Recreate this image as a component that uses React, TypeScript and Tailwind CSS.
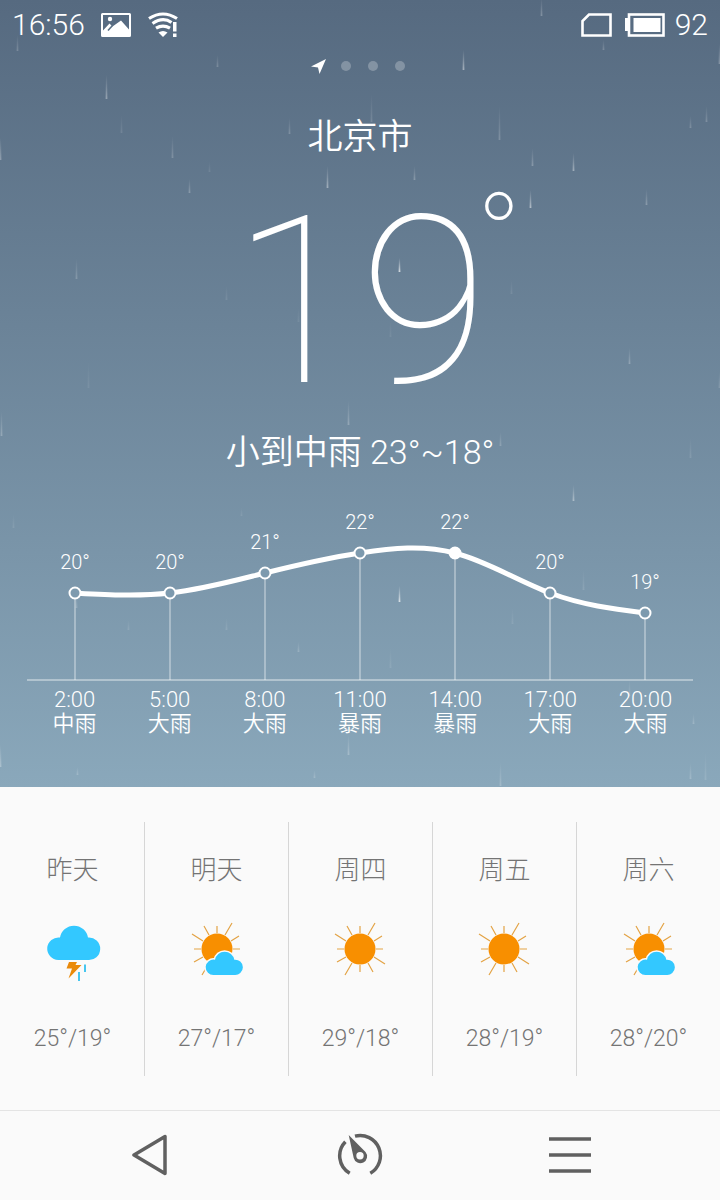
type Icon = 'thunder' | 'partly' | 'sunny'

const hours = [
  { time: '2:00', weather: '中雨', temp: 20 },
  { time: '5:00', weather: '大雨', temp: 20 },
  { time: '8:00', weather: '大雨', temp: 21 },
  { time: '11:00', weather: '暴雨', temp: 22 },
  { time: '14:00', weather: '暴雨', temp: 22, current: true },
  { time: '17:00', weather: '大雨', temp: 20 },
  { time: '20:00', weather: '大雨', temp: 19 },
]

const days: { name: string; icon: Icon; range: string }[] = [
  { name: '昨天', icon: 'thunder', range: '25°/19°' },
  { name: '明天', icon: 'partly', range: '27°/17°' },
  { name: '周四', icon: 'sunny', range: '29°/18°' },
  { name: '周五', icon: 'sunny', range: '28°/19°' },
  { name: '周六', icon: 'partly', range: '28°/20°' },
]

// x, bottom, length, opacity
const drops = [
  [17, 51, 16, 0.2], [106, 99, 24, 0.35], [217, 67, 12, 0.2], [463, 70, 20, 0.45],
  [121, 133, 18, 0.12], [172, 158, 22, 0.2], [289, 134, 16, 0.2], [371, 122, 28, 0.15],
  [499, 140, 34, 0.2], [532, 166, 18, 0.25], [573, 171, 18, 0.4], [690, 128, 12, 0.2],
  [706, 122, 16, 0.2], [189, 193, 14, 0.25], [327, 188, 22, 0.4], [414, 180, 14, 0.25],
  [530, 208, 18, 0.5], [646, 205, 16, 0.25], [209, 172, 10, 0.1], [76, 279, 20, 0.2],
  [399, 272, 14, 0.7], [226, 300, 14, 0.1], [511, 294, 14, 0.1], [629, 364, 16, 0.25],
  [88, 388, 26, 0.08], [390, 337, 16, 0.08], [298, 322, 14, 0.08], [348, 425, 24, 0.25],
  [573, 501, 16, 0.4], [500, 446, 14, 0.2], [690, 458, 20, 0.12], [1, 436, 24, 0.25],
  [0, 160, 22, 0.3], [719, 64, 20, 0.25], [541, 16, 18, 0.25], [603, 50, 10, 0.2],
  [76, 608, 12, 0.2], [399, 602, 16, 0.7], [583, 590, 20, 0.12], [128, 630, 10, 0.12],
  [226, 630, 12, 0.12], [298, 652, 10, 0.2], [512, 624, 16, 0.1], [390, 668, 20, 0.1],
  [629, 696, 16, 0.15], [693, 724, 10, 0.2], [348, 755, 20, 0.25], [0, 767, 22, 0.3],
  [77, 775, 8, 0.2], [314, 778, 8, 0.2], [500, 786, 24, 0.2], [690, 779, 16, 0.2],
  [705, 780, 28, 0.12], [13, 528, 14, 0.1], [241, 516, 8, 0.1], [719, 388, 16, 0.15],
]

function Rain() {
  return (
    <svg
      className="pointer-events-none absolute inset-0 h-full w-full"
      viewBox="0 0 720 787"
      preserveAspectRatio="xMidYMid slice"
      aria-hidden="true"
    >
      <defs>
        <linearGradient id="drop" x1="0" y1="0" x2="0" y2="1">
          <stop offset="0" stopColor="#fff" stopOpacity="0" />
          <stop offset="1" stopColor="#fff" />
        </linearGradient>
      </defs>
      {drops.map(([x, bottom, length, opacity], i) => (
        <path
          key={i}
          d={`M${x} ${bottom - length}h1l.4 ${length}h-1.8z`}
          fill="url(#drop)"
          opacity={opacity}
        />
      ))}
    </svg>
  )
}

function StatusBar() {
  return (
    <div className="flex h-[50px] items-center justify-between px-3 text-[30px] leading-9 font-light">
      <div className="flex items-center">
        <span>16:56</span>
        <svg className="ml-4" width="30" height="24" viewBox="0 0 30 24" aria-hidden="true">
          <rect x="1" y="1" width="28" height="22" rx="0.5" fill="none" stroke="#fff" strokeWidth="2" />
          <circle cx="9" cy="6" r="2.2" fill="#fff" />
          <path d="M2 17.500 8.500 10.500 11.500 13.500 20 7.500 28 16.500V22.500H2Z" fill="#fff" />
          <path d="M7 17.500 11.500 12.500" stroke="#5a7085" strokeWidth="1.600" />
        </svg>
        <svg className="ml-[17px]" width="31" height="26" viewBox="0 0 31 26" aria-hidden="true">
          <g fill="none" stroke="#fff" strokeWidth="3.200">
            <path d="M1 6.500Q15 -2.500 29 6.500" />
            <path d="M4.500 11.500Q15 4.500 23.500 10.500" />
            <path d="M8 16.200Q15 12 22 16.200" />
          </g>
          <path d="M10.500 20.500Q15 17.500 19.500 20.500L15 25Z" fill="#fff" />
          <path d="M25 10h3.500v9.500H25zM25 21.500h3.500V25H25z" fill="#fff" />
        </svg>
      </div>
      <div className="flex items-center">
        <svg width="31" height="24" viewBox="0 0 31 24" aria-hidden="true">
          <path d="M8 1.500H29.500V22.500H1.500V8Z" fill="none" stroke="#fff" strokeWidth="2.600" />
        </svg>
        <svg className="mr-[10px] ml-[13px]" width="40" height="24" viewBox="0 0 40 24" aria-hidden="true">
          <path d="M0 5h3v13H0z" fill="#fff" />
          <rect x="4" y="1.500" width="34.500" height="21" fill="none" stroke="#fff" strokeWidth="2.600" />
          <rect x="8.500" y="5" width="27" height="14" fill="#fff" />
        </svg>
        <span>92</span>
      </div>
    </div>
  )
}

function Pager() {
  return (
    <div className="flex h-8 items-center justify-center gap-[17px] pr-1">
      <svg className="-mr-0.5" width="15" height="15" viewBox="0 0 15 15" aria-hidden="true">
        <path d="M15 0 8.500 15 7 8.500 0 7.500Z" fill="#fff" />
      </svg>
      <span className="size-[10px] rounded-full bg-white/25" />
      <span className="size-[10px] rounded-full bg-white/25" />
      <span className="size-[10px] rounded-full bg-white/25" />
    </div>
  )
}

function HourlyChart() {
  const points = hours.map((hour, i) => ({
    ...hour,
    x: 48 + i * 95,
    y: 93 - (hour.temp - 20) * 20,
  }))

  return (
    <svg className="block w-full" viewBox="0 0 666 181" role="img" aria-label="24小时气温">
      <g stroke="#fff" strokeOpacity="0.5" strokeWidth="1.300">
        {points.map((p) => (
          <path key={p.time} d={`M${p.x} ${p.y + 6}V180`} />
        ))}
        <path d="M0 180H666" />
      </g>
      <path
        d="M48 93C80 94.700 111 96.500 143 93S206 81 238 73S301 58 333 53S396 44.700 428 53S491 81 523 93S586 109 618 113"
        fill="none"
        stroke="#fff"
        strokeWidth="5"
      />
      {points.map((p) => (
        <g key={p.time}>
          <circle
            cx={p.x}
            cy={p.y}
            r="5.500"
            fill={p.current ? '#fff' : '#7d9aae'}
            stroke="#fff"
            strokeWidth="2"
          />
          <text x={p.x} y={p.y - 24} textAnchor="middle" fill="#fff" className="text-[20px] font-light">
            {p.temp}°
          </text>
        </g>
      ))}
    </svg>
  )
}

function Sun({ cx, cloudy }: { cx: number; cloudy?: boolean }) {
  return (
    <g transform={`translate(${cx} 29)`}>
      <path
        d="M0-16V-23M0 16V23M-16 0H-23M16 0H23M-14-8-25-15M-8-14-13-23M8-14 15-26M14-8 22-13M-8 14-15 26M-14 8-23 13"
        stroke="#e3a345"
        strokeWidth="1.200"
        fill="none"
      />
      {!cloudy && <path d="M14 8 25 15M8 14 13 23" stroke="#e3a345" strokeWidth="1.200" />}
      <circle r="15.500" fill="#f88f00" />
    </g>
  )
}

function WeatherIcon({ icon }: { icon: Icon }) {
  return (
    <svg width="64" height="64" viewBox="1 0 64 64" aria-hidden="true">
      {icon === 'thunder' && (
        <>
          <path
            d="M18.300 40A11.300 11.300 0 1 1 20 17.500 14.200 14.200 0 0 1 48 17.500 11.300 11.300 0 1 1 47.700 40Z"
            fill="#33c8ff"
          />
          <path d="M29 42H37L35.500 45H41.500L28.500 58.500 32 48.500H26.500Z" fill="#ea8a0a" />
          <path d="M39 52V61M45 44.500V52" stroke="#33c0ee" strokeWidth="1.800" />
        </>
      )}
      {icon === 'sunny' && <Sun cx={32} />}
      {icon === 'partly' && (
        <>
          <Sun cx={33} cloudy />
          <path
            d="M30 55A7.700 7.700 0 1 1 31 39.800 9.800 9.800 0 0 1 50.300 39.700 7.700 7.700 0 1 1 50.300 55Z"
            fill="#33c8ff"
            stroke="#fafafa"
            strokeWidth="3"
            paintOrder="stroke"
          />
        </>
      )}
    </svg>
  )
}

function NavBar() {
  return (
    <nav className="grid h-[90px] grid-cols-3 border-t border-[#e4e4e4] px-[45px] pb-0.5">
      <button type="button" aria-label="返回" className="flex items-center justify-center">
        <svg width="36" height="42" viewBox="0 0 36 42">
          <path d="M33 2.500V39.500L2 21Z" fill="none" stroke="#606060" strokeWidth="3.500" strokeLinejoin="round" />
        </svg>
      </button>
      <button type="button" aria-label="仪表" className="flex items-center justify-center">
        <svg width="46" height="46" viewBox="0 0 46 46">
          <path
            d="M12.700 41.300A20.300 20.300 0 0 1 8.400 9.700M18 4.100A20.300 20.300 0 0 1 33.300 41.300"
            fill="none"
            stroke="#606060"
            strokeWidth="3.500"
          />
          <path
            d="M11.700 3 28.500 20A6.800 6.800 0 1 1 16.700 26ZM23 20.100A3.700 3.700 0 1 0 23 27.500 3.700 3.700 0 1 0 23 20.100Z"
            fill="#606060"
            fillRule="evenodd"
          />
        </svg>
      </button>
      <button type="button" aria-label="菜单" className="flex items-center justify-center">
        <svg width="42" height="36" viewBox="0 0 42 36">
          <path d="M0 2H42M0 18H42M0 34H42" stroke="#606060" strokeWidth="3.500" />
        </svg>
      </button>
    </nav>
  )
}

export default function App() {
  return (
    <div
      lang="zh-CN"
      className="min-h-screen bg-[#fafafa] font-[Roboto,'Noto_Sans_CJK_SC',sans-serif]"
    >
      <main>
        <section className="relative overflow-hidden bg-linear-to-b from-[#566a80] to-[#8aa8bb] pb-[51px] text-white">
          <Rain />
          <StatusBar />
          <Pager />
          <h1 className="mt-8 text-center text-[35px] leading-[48px] font-[350]">北京市</h1>
          <div className="mt-10 flex justify-center">
            <p className="relative text-[234px] leading-[200px] font-[140]">
              19
              <span className="absolute -top-6 left-full -ml-3 text-[120px] leading-[120px]">°</span>
            </p>
          </div>
          <p className="mt-[26px] text-center text-[34px] leading-[48px] font-[350]">小到中雨 23°~18°</p>
          <div className="mt-6 px-[27px]">
            <HourlyChart />
            <ul className="mt-[7px] grid grid-cols-7 text-center text-[22px] leading-6 font-light">
              {hours.map((hour) => (
                <li key={hour.time}>
                  <p>{hour.time}</p>
                  <p className="font-[350]">{hour.weather}</p>
                </li>
              ))}
            </ul>
          </div>
        </section>
        <ul className="grid grid-cols-5 pt-[35px] pb-[34px] font-light text-[#747474]">
          {days.map((day) => (
            <li
              key={day.name}
              className="flex flex-col items-center border-l border-[#d6d6d6] pt-[30px] pb-[19px] first:border-transparent"
            >
              <h2 className="text-[26px] leading-9">{day.name}</h2>
              <div className="mt-8">
                <WeatherIcon icon={day.icon} />
              </div>
              <p className="mt-[37px] text-[23px] leading-9">{day.range}</p>
            </li>
          ))}
        </ul>
      </main>
      <NavBar />
    </div>
  )
}
